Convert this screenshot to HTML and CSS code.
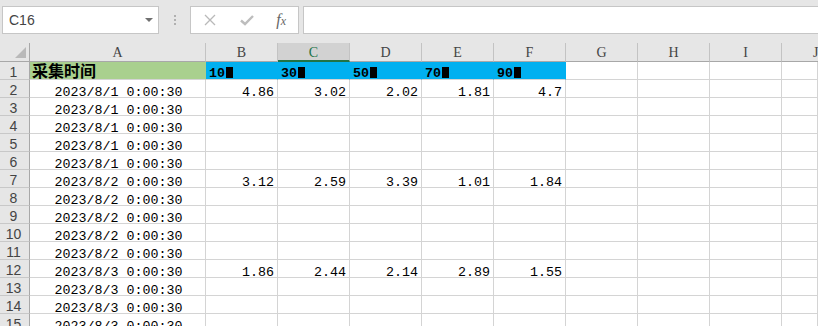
FILE: index.html
```html
<!DOCTYPE html>
<html>
<head>
<meta charset="utf-8">
<link rel="stylesheet" href="styles.css">
</head>
<body>
<div class="app">
  <div class="toolbar">
    <div class="namebox"><span class="nametext">C16</span><span class="caret"></span></div>
    <div class="dots"><i></i><i></i><i></i></div>
    <div class="fbtns">
      <svg class="ico" width="14" height="14" viewBox="0 0 14 14"><path d="M2 2L12 12M12 2L2 12" stroke="#b9b9b9" stroke-width="1.3" fill="none"/></svg>
      <svg class="ico" width="16" height="14" viewBox="0 0 16 14"><path d="M2 7.5L6 11L14 3" stroke="#bdbdbd" stroke-width="2.4" fill="none"/></svg>
      <span class="fx">f<span class="fxx">x</span></span>
    </div>
    <div class="finput"></div>
  </div>
  <div class="sheet">
    <div class="ch corner"><span class="tri"></span></div>
    <div class="ch">A</div><div class="ch">B</div><div class="ch sel">C</div><div class="ch">D</div><div class="ch">E</div><div class="ch">F</div><div class="ch">G</div><div class="ch">H</div><div class="ch">I</div><div class="ch jh">J</div>

    <div class="rh">1</div>
    <div class="c fg hd">采集时间</div>
    <div class="c fb hd">10<span class="tofu"></span></div>
    <div class="c fb hd">30<span class="tofu"></span></div>
    <div class="c fb hd">50<span class="tofu"></span></div>
    <div class="c fb hd">70<span class="tofu"></span></div>
    <div class="c fb hd">90<span class="tofu"></span></div>
    <div class="c"></div><div class="c"></div><div class="c"></div><div class="c"></div>

    <div class="rh">2</div>
    <div class="c date">2023/8/1 0:00:30</div>
    <div class="c num">4.86</div><div class="c num">3.02</div><div class="c num">2.02</div><div class="c num">1.81</div><div class="c num">4.7</div>
    <div class="c"></div><div class="c"></div><div class="c"></div><div class="c"></div>

    <div class="rh">3</div>
    <div class="c date">2023/8/1 0:00:30</div>
    <div class="c"></div><div class="c"></div><div class="c"></div><div class="c"></div><div class="c"></div><div class="c"></div><div class="c"></div><div class="c"></div><div class="c"></div>

    <div class="rh">4</div>
    <div class="c date">2023/8/1 0:00:30</div>
    <div class="c"></div><div class="c"></div><div class="c"></div><div class="c"></div><div class="c"></div><div class="c"></div><div class="c"></div><div class="c"></div><div class="c"></div>

    <div class="rh">5</div>
    <div class="c date">2023/8/1 0:00:30</div>
    <div class="c"></div><div class="c"></div><div class="c"></div><div class="c"></div><div class="c"></div><div class="c"></div><div class="c"></div><div class="c"></div><div class="c"></div>

    <div class="rh">6</div>
    <div class="c date">2023/8/1 0:00:30</div>
    <div class="c"></div><div class="c"></div><div class="c"></div><div class="c"></div><div class="c"></div><div class="c"></div><div class="c"></div><div class="c"></div><div class="c"></div>

    <div class="rh">7</div>
    <div class="c date">2023/8/2 0:00:30</div>
    <div class="c num">3.12</div><div class="c num">2.59</div><div class="c num">3.39</div><div class="c num">1.01</div><div class="c num">1.84</div>
    <div class="c"></div><div class="c"></div><div class="c"></div><div class="c"></div>

    <div class="rh">8</div>
    <div class="c date">2023/8/2 0:00:30</div>
    <div class="c"></div><div class="c"></div><div class="c"></div><div class="c"></div><div class="c"></div><div class="c"></div><div class="c"></div><div class="c"></div><div class="c"></div>

    <div class="rh">9</div>
    <div class="c date">2023/8/2 0:00:30</div>
    <div class="c"></div><div class="c"></div><div class="c"></div><div class="c"></div><div class="c"></div><div class="c"></div><div class="c"></div><div class="c"></div><div class="c"></div>

    <div class="rh">10</div>
    <div class="c date">2023/8/2 0:00:30</div>
    <div class="c"></div><div class="c"></div><div class="c"></div><div class="c"></div><div class="c"></div><div class="c"></div><div class="c"></div><div class="c"></div><div class="c"></div>

    <div class="rh">11</div>
    <div class="c date">2023/8/2 0:00:30</div>
    <div class="c"></div><div class="c"></div><div class="c"></div><div class="c"></div><div class="c"></div><div class="c"></div><div class="c"></div><div class="c"></div><div class="c"></div>

    <div class="rh">12</div>
    <div class="c date">2023/8/3 0:00:30</div>
    <div class="c num">1.86</div><div class="c num">2.44</div><div class="c num">2.14</div><div class="c num">2.89</div><div class="c num">1.55</div>
    <div class="c"></div><div class="c"></div><div class="c"></div><div class="c"></div>

    <div class="rh">13</div>
    <div class="c date">2023/8/3 0:00:30</div>
    <div class="c"></div><div class="c"></div><div class="c"></div><div class="c"></div><div class="c"></div><div class="c"></div><div class="c"></div><div class="c"></div><div class="c"></div>

    <div class="rh">14</div>
    <div class="c date">2023/8/3 0:00:30</div>
    <div class="c"></div><div class="c"></div><div class="c"></div><div class="c"></div><div class="c"></div><div class="c"></div><div class="c"></div><div class="c"></div><div class="c"></div>

    <div class="rh">15</div>
    <div class="c date">2023/8/3 0:00:30</div>
    <div class="c"></div><div class="c"></div><div class="c"></div><div class="c"></div><div class="c"></div><div class="c"></div><div class="c"></div><div class="c"></div><div class="c"></div>
  </div>
</div>
</body>
</html>
```
FILE: styles.css
```css
html, body {
  margin: 0;
  padding: 0;
  width: 818px;
  height: 326px;
  overflow: hidden;
  background: #ffffff;
}
.app {
  width: 818px;
  height: 326px;
  overflow: hidden;
  background: #e6e6e6;
}
.toolbar {
  height: 43px;
  display: flex;
  align-items: flex-start;
  padding-top: 6px;
  box-sizing: border-box;
  background: #e6e6e6;
}
.namebox {
  margin-left: 2px;
  width: 157px;
  height: 28px;
  box-sizing: border-box;
  border: 1px solid #c6c6c6;
  background: #ffffff;
  display: flex;
  align-items: center;
  justify-content: space-between;
  padding: 0 5px 0 6px;
}
.nametext {
  font-family: "Liberation Sans", Arial, sans-serif;
  font-size: 14px;
  color: #444444;
}
.caret {
  width: 0;
  height: 0;
  border-left: 4px solid transparent;
  border-right: 4px solid transparent;
  border-top: 4px solid #707070;
}
.dots {
  width: 31px;
  height: 28px;
  display: flex;
  flex-direction: column;
  align-items: center;
  justify-content: center;
  gap: 2px;
}
.dots i {
  display: block;
  width: 2px;
  height: 2px;
  background: #b0b0b0;
}
.fbtns {
  width: 109px;
  height: 28px;
  box-sizing: border-box;
  border: 1px solid #c6c6c6;
  background: #ffffff;
  display: flex;
  align-items: center;
  justify-content: space-between;
  padding: 0 12px 0 12px;
}
.ico {
  display: block;
}
.fx {
  font-family: "Liberation Serif", "Times New Roman", serif;
  font-style: italic;
  font-size: 16px;
  color: #666666;
  line-height: 1;
}
.fxx {
  font-size: 12px;
}
.finput {
  margin-left: 4px;
  flex: 1;
  height: 28px;
  box-sizing: border-box;
  border: 1px solid #c6c6c6;
  border-right: none;
  background: #ffffff;
}
.sheet {
  display: grid;
  grid-template-columns: 30px 176px repeat(8, 72px) 1fr;
  grid-template-rows: 19px;
  grid-auto-rows: 18px;
  background: #ffffff;
}
.ch {
  box-sizing: border-box;
  background: #e6e6e6;
  border-right: 1px solid #c3c3c3;
  border-bottom: 1px solid #a8a8a8;
  font-family: "Liberation Serif", "Times New Roman", serif;
  font-size: 14px;
  color: #444444;
  text-align: center;
  line-height: 20px;
}
.ch.corner {
  position: relative;
  border-right: 1px solid #a8a8a8;
}
.tri {
  position: absolute;
  right: 3px;
  bottom: 3px;
  width: 0;
  height: 0;
  border-left: 11px solid transparent;
  border-bottom: 11px solid #b9b9b9;
}
.ch.sel {
  background: #d2d2d2;
  color: #217346;
  border-bottom: 2px solid #217346;
  line-height: 19px;
}
.ch.jh {
  text-align: left;
  padding-left: 31px;
  border-right: none;
}
.rh {
  box-sizing: border-box;
  background: #e6e6e6;
  border-right: 1px solid #a8a8a8;
  border-bottom: 1px solid #c8c8c8;
  font-family: "Liberation Sans", Arial, sans-serif;
  font-size: 14px;
  color: #444444;
  line-height: 17px;
  padding-top: 2px;
  padding-right: 2px;
  text-align: center;
}
.c {
  box-sizing: border-box;
  border-right: 1px solid #d4d4d4;
  border-bottom: 1px solid #d4d4d4;
  font-family: "Liberation Mono", "Courier New", monospace;
  font-size: 13.33px;
  color: #000000;
  line-height: 17px;
  padding-top: 4px;
  white-space: nowrap;
  overflow: visible;
}
.date {
  text-align: center;
  padding-left: 2px;
}
.num {
  text-align: right;
  padding-right: 3px;
}
.fg {
  background: #a9d08e;
  border-right-color: #a9d08e;
}
.fb {
  background: #00b0f0;
  border-right-color: #00b0f0;
}
.hd {
  font-weight: bold;
  padding-left: 3px;
  padding-top: 3px;
}
.fg.hd {
  font-family: "Noto Sans CJK SC", "Liberation Sans", sans-serif;
  font-size: 16px;
  line-height: 16px;
  padding-top: 0;
  padding-left: 2px;
}
.tofu {
  display: inline-block;
  width: 7px;
  height: 11px;
  margin-left: 1px;
  background: #000000;
  vertical-align: -1px;
}
```
